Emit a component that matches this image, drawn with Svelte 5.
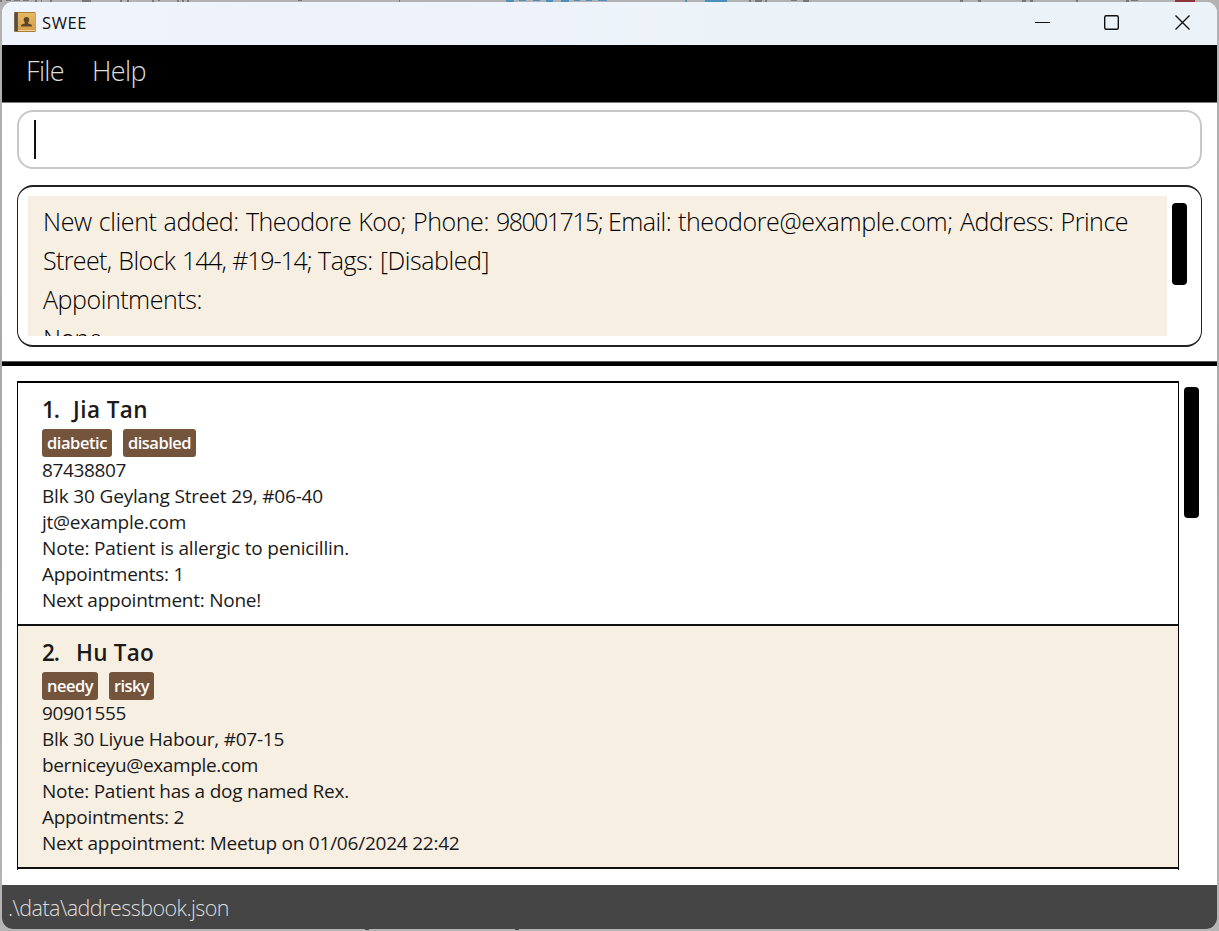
<script>
  const people = [
    {
      n: '1.', name: 'Jia Tan', nameW: 75,
      tags: [['diabetic', 60], ['disabled', 63]],
      lines: [['87438807', 84], ['Blk 30 Geylang Street 29, #06-40', 281], ['jt@example.com', 144], ['Note: Patient is allergic to penicillin.', 307], ['Appointments: 1', 142], ['Next appointment: None!', 219]]
    },
    {
      n: '2.', name: 'Hu Tao', nameW: 78,
      tags: [['needy', 46], ['risky', 35]],
      lines: [['90901555', 84], ['Blk 30 Liyue Habour, #07-15', 242], ['berniceyu@example.com', 216], ['Note: Patient has a dog named Rex.', 307], ['Appointments: 2', 142], ['Next appointment: Meetup on 01/06/2024 22:42', 417.5]]
    }
  ];
  const result = [
    [['New client added: ', 203], ['Theodore Koo; ', 167], ['Phone: ', 83], ['98001715; ', 112], ['Email: ', 70], ['theodore@example.com; ', 282], ['Address: Prince', 168]],
    [['Street, Block ', 139], ['144, #19-14; ', 136], ['Tags: [Disabled]', 171]],
    [['Appointments:', 159]],
    [['None', 59]]
  ];
  // Tracks a piece of text so that it spans the given width.
  function fit(node, width) {
    const natural = node.getBoundingClientRect().width;
    node.style.letterSpacing = (width - natural) / node.textContent.length + 'px';
  }
</script>

<div class="desktop">
  <svg class="behind" width="1219" height="931" aria-hidden="true">
    <path fill="#777" d="M0 0h2v2h-2zM6 0h5v1h-5zM14 0h6v1h-6zM23 0h6v1h-6zM35 0h2v2h-2zM41 0h1v2h-1zM50 0h2v2h-2zM82 0h9v2h-9zM120 0h2v2h-2zM127 0h2v2h-2zM152 0h2v2h-2zM158 0h2v1h-2zM177 0h2v2h-2zM182 0h2v2h-2zM187 0h2v2h-2zM298 0h4v1h-4zM399 0h1v2h-1zM749 0h2v2h-2zM755 0h7v2h-7zM765 0h2v2h-2zM791 0h6v1h-6zM803 0h6v2h-6zM960 0h3v2h-3zM978 0h3v2h-3zM1022 0h4v2h-4zM1030 0h3v2h-3zM1076 0h2v2h-2zM1126 0h3v2h-3zM1131 0h7v1h-7z"/>
    <path fill="#4a90bd" d="M506 0h8v2h-8zM519 0h7v1h-7zM533 0h7v1h-7zM546 0h7v2h-7zM561 0h8v2h-8zM574 0h6v1h-6zM586 0h6v1h-6zM598 0h9v1h-9zM685 0h2v2h-2zM705 0h22v2h-22z"/>
    <path fill="#8f3439" d="M1175 0h20v2h-20z"/>
    <path fill="#444" d="M365 929h4v1h-4zM515 929h4v1h-4z"/>
  </svg>
  <main class="window">
    <header>
      <svg class="book" width="22" height="20" viewBox="0 0 22 20" aria-hidden="true">
        <defs><linearGradient id="cover" x2="0" y2="1"><stop stop-color="#e7b866"/><stop offset="1" stop-color="#d6a04b"/></linearGradient></defs>
        <rect x=".2" y="0" width="21.5" height="20" rx="1" fill="#a87d38"/>
        <rect x="4" y="1" width="17" height="17" fill="url(#cover)"/>
        <rect x=".4" y=".3" width="3.3" height="19" fill="#594c40"/>
        <path d="M4 18.5h17" stroke="#f0d398"/>
        <path fill="#5d4624" d="M12.4 5c1.800 0 2.900 1.100 2.800 3-.1 1.200-.6 1.900-1.100 2.400v1l3.200 1.100c.5.3.6 1 .6 2H7.100c0-1 .1-1.700.6-2l3.100-1.100v-1c-.6-.6-1-1.400-1.100-2.400C9.600 6.100 10.700 5 12.400 5z"/>
      </svg>
      <span class="apptitle"><span use:fit={45}>SWEE</span></span>
      <svg class="controls" width="160" height="20" viewBox="0 0 160 20" fill="none" stroke="#111" stroke-width="1.4" aria-hidden="true">
        <path d="M0 10.500h15" stroke-width="1"/><rect x="69.700" y="3.700" width="13.600" height="13.600" rx="1.500"/><path d="M140.500 3.500l14 14m0-14l-14 14"/>
      </svg>
    </header>
    <nav><span class="menu"><span use:fit={38}>File</span></span><span><span use:fit={54}>Help</span></span></nav>
    <section class="command"><div class="input"><i></i></div></section>
    <section class="result">
      <div class="box">
        <div class="message">{#each result as line}<div>{#each line as [t, w]}<span use:fit={w}>{t}</span>{/each}</div>{/each}</div>
        <div class="thumb"></div>
      </div>
    </section>
    <div class="rule"></div>
    <section class="people">
      <div class="list">
        {#each people as p, i}
          <article class:alt={i === 1}>
            <h2><span class="num"><span use:fit={17}>{p.n}</span></span><span use:fit={p.nameW}>{p.name}</span></h2>
            <div class="tags">{#each p.tags as [t, w]}<b><span use:fit={w}>{t}</span></b>{/each}</div>
            {#each p.lines as [t, w]}<p><span use:fit={w}>{t}</span></p>{/each}
          </article>
        {/each}
      </div>
      <div class="thumb tall"></div>
    </section>
    <footer><span use:fit={221}>.\data\addressbook.json</span></footer>
  </main>
</div>

<style>
  :global(body) { margin: 0; }
  * { box-sizing: border-box; }
  .desktop { width: 1219px; height: 931px; padding: 2px 2px 0; background: linear-gradient(#b2b2b2, #a8a8a8 50%, #b5b5b5); overflow: hidden; position: relative; font-family: "Open Sans", "Noto Sans", sans-serif; white-space: nowrap; }
  .behind { position: absolute; left: 0; top: 0; }
  .window { position: relative; width: 1215px; height: 927px; background: #fff; border-radius: 11px; overflow: hidden; display: flex; flex-direction: column; }
  header { height: 43px; flex: none; display: flex; align-items: center; background: linear-gradient(90deg, #eff3fb, #eef3fb 45%, #ecf3f8 60%, #ecf3f8); padding: 0 34px 3px 12px; }
  .apptitle { margin-left: 6px; font-size: 16.5px; color: #111; flex: 1; }
  .controls { margin-right: -12px; }
  nav { height: 58px; flex: none; background: #000; border-bottom: 1px solid #777; color: #dedede; font-size: 27px; font-weight: 300; line-height: 51px; padding-left: 24px; display: flex; }
  .menu { width: 66px; }
  .command { padding: 7px 15px 0; }
  .input { width: 1185px; height: 59px; border: 2px solid #c8c8c8; border-radius: 16px; padding: 8px 15px; }
  i { display: block; width: 2px; height: 39px; background: #111; }
  .result { padding: 16px 15px 0; }
  .box { width: 1185px; height: 162px; border: 1.5px solid #222; border-width: 2px 1px; border-radius: 16px; padding: 9px 0 0 10px; display: flex; }
  .message { width: 1139px; height: 140px; background: #f7efe2; overflow: hidden; padding: 6px 0 0 15px; color: #000; font-size: 25px; font-weight: 300; line-height: 39px; word-spacing: 1px; white-space: pre; }
  .thumb { width: 15px; height: 82px; background: #000; border-radius: 4px; margin: 7px 0 0 5px; }
  .rule { height: 5px; flex: none; background: #000; margin-top: 14px; border-top: 1px solid #555; }
  .people { flex: none; display: flex; height: 504px; padding: 15px 0 0 15px; }
  .list { width: 1162px; height: 489px; border: solid #000; border-width: 2px 1px 0; overflow: hidden; }
  article { height: 243px; border-bottom: 2px solid #111; padding: 9px 0 0 24px; color: #1a1a1a; }
  article.alt { background: #f7efe2; }
  h2 { margin: 0; height: 37px; font-size: 22.5px; line-height: 36px; font-weight: 600; display: flex; }
  .num { width: 31px; }
  .alt .num { width: 34px; }
  .tags { display: flex; gap: 11px; height: 28px; }
  b { display: block; height: 28px; border-radius: 3px; background: #75543c; color: #fff; font-size: 16.5px; line-height: 28px; font-weight: 600; padding: 0 5px; }
  p { margin: 0; font-size: 19px; line-height: 26px; }
  .thumb.tall { height: 131px; margin: 6px 0 0 5px; }
  footer { flex: 1; background: #454545; color: #dedede; font-size: 21.5px; font-weight: 300; line-height: 46px; padding-left: 6px; margin-top: 15px; }
</style>
